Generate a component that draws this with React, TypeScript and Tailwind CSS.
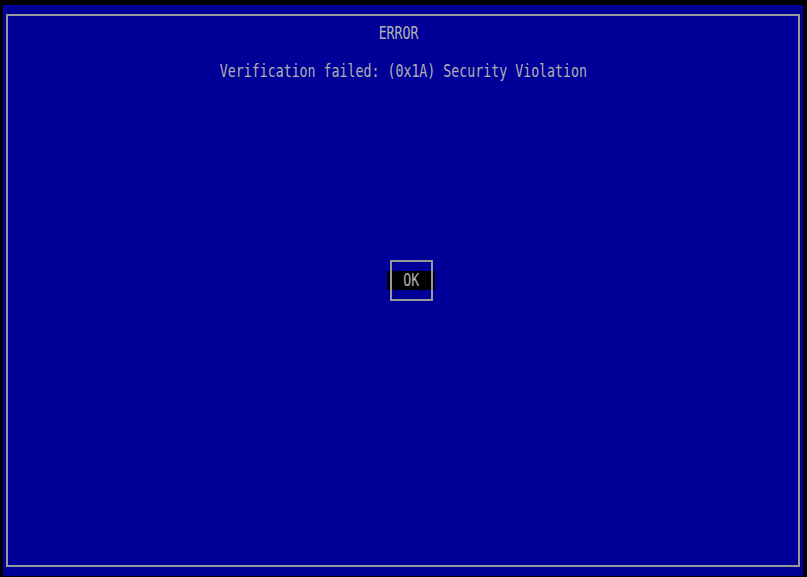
import React from "react";

const mono = { fontFamily: '"DejaVu Sans Mono", "Liberation Mono", monospace' };

function Txt({ children }: { children: React.ReactNode }) {
  return (
    <span className="inline-block origin-center scale-x-[0.78] whitespace-pre">{children}</span>
  );
}

export default function App() {
  return (
    <div className="w-[807px] h-[577px] bg-black pl-[3px] pt-[5px] overflow-hidden" style={mono}>
      <div className="w-[800px] h-[571px] bg-[#000098] pt-[9px] px-[3px]">
        <div className="h-[553px] border-2 border-[#989898] text-[#b0b0b0] text-[17px] leading-[19px]">
          <div className="mt-[8px] h-[19px] text-center pr-[8px]">
            <Txt>ERROR</Txt>
          </div>
          <div className="mt-[19px] h-[19px] text-center">
            <Txt>Verification failed: (0x1A) Security Violation</Txt>
          </div>
          <div className="mt-[179px] flex justify-center pl-[16px]">
            <div className="relative w-[48px] h-[41px]">
              <div className="mt-[11px] h-[19px] bg-black text-center">
                <Txt>OK</Txt>
              </div>
              <div className="absolute left-[3px] top-0 w-[43px] h-[41px] border-2 border-[#989898]" />
            </div>
          </div>
        </div>
      </div>
    </div>
  );
}
